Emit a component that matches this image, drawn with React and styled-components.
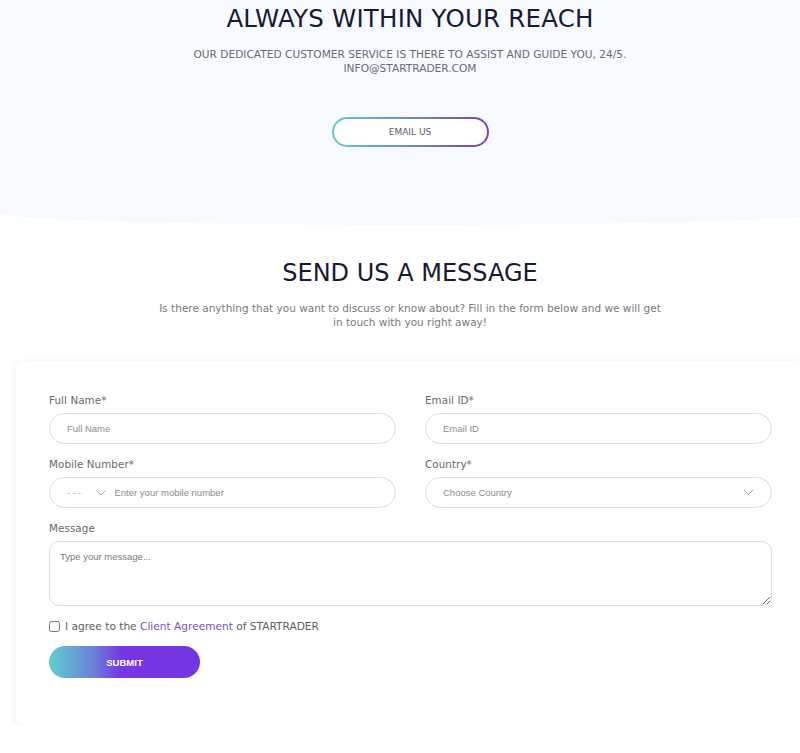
import styled, { createGlobalStyle } from "styled-components";

const GlobalStyle = createGlobalStyle`
  html, body {
    margin: 0;
    padding: 0;
    background: #ffffff;
    overflow-x: hidden;
  }
  body {
    font-family: "DejaVu Sans", "Noto Sans", sans-serif;
    color: #1c1c30;
  }
  * { box-sizing: border-box; }
`;

const Page = styled.main`
  width: 820px;
`;

const Hero = styled.section`
  background: #f6faff;
  height: 225px;
  border-radius: 0 0 50% 50% / 0 0 12px 12px;
  text-align: center;
  padding-top: 3px;
`;

const Title = styled.h1`
  margin: 0;
  font-size: 24.5px;
  line-height: 32px;
  font-weight: 400;
  color: #181a33;
  letter-spacing: 0.2px;
`;

const Lead = styled.p`
  margin: 12px 0 0;
  font-size: 10.6px;
  line-height: 14px;
  color: #676a72;
  text-transform: uppercase;
`;

const OutlineButton = styled.button`
  margin-top: 42px;
  width: 157px;
  height: 30px;
  border-radius: 16px;
  border: 2px solid transparent;
  background:
    linear-gradient(#fff, #fff) padding-box,
    linear-gradient(90deg, #66ccc8, #7a42b6) border-box;
  font-family: inherit;
  font-size: 9px;
  color: #555a66;
  cursor: pointer;
`;

const Section = styled.section`
  text-align: center;
  padding-top: 33px;
`;

const SectionTitle = styled.h2`
  margin: 0;
  font-size: 24px;
  line-height: 30px;
  font-weight: 400;
  color: #181a33;
`;

const SectionText = styled.p`
  margin: 13px auto 0;
  width: 510px;
  font-size: 10.5px;
  line-height: 14px;
  color: #77797f;
`;

const Card = styled.form`
  margin: 32px 16px 0;
  background: #fff;
  border-radius: 8px;
  box-shadow: 0 2px 10px rgba(0, 0, 0, 0.08);
  padding: 32px 33px 47px;
  text-align: left;
`;

const Grid = styled.div`
  display: grid;
  grid-template-columns: 347px 347px;
  column-gap: 29px;
  row-gap: 13px;
`;

const Field = styled.div`
  display: flex;
  flex-direction: column;
  gap: 6px;
  grid-column: ${(p) => (p.$wide ? "1 / -1" : "auto")};
`;

const Label = styled.label`
  font-size: 10.3px;
  line-height: 14px;
  color: #66686e;
  letter-spacing: 0.1px;
`;

const Pill = styled.div`
  height: 31px;
  border: 1px solid #dcdde0;
  border-radius: 16px;
  display: flex;
  align-items: center;
  padding: 0 17px;
  background: #fff;
`;

const Input = styled.input`
  flex: 1;
  min-width: 0;
  border: none;
  outline: none;
  background: transparent;
  font-family: "Liberation Sans", Arial, sans-serif;
  font-size: 9.5px;
  color: #333;
  padding: 0;
  &::placeholder { color: #8a8c90; }
`;

const Dial = styled.span`
  display: flex;
  align-items: center;
  gap: 12px;
  margin-right: 9px;
  font-family: "Liberation Sans", Arial, sans-serif;
  font-size: 9px;
  color: #a8aaae;
  letter-spacing: 2.5px;
`;

const SelectText = styled.span`
  flex: 1;
  font-family: "Liberation Sans", Arial, sans-serif;
  font-size: 9.5px;
  color: #8a8c90;
`;

const TextArea = styled.textarea`
  height: 65px;
  border: 1px solid #dcdde0;
  border-radius: 10px;
  padding: 9px 10px;
  font-family: "Liberation Sans", Arial, sans-serif;
  font-size: 9.5px;
  color: #333;
  outline: none;
  resize: both;
  &::placeholder { color: #77797d; }
`;

const Agree = styled.label`
  display: flex;
  align-items: center;
  gap: 5px;
  margin-top: 13px;
  font-size: 10.6px;
  line-height: 14px;
  color: #5a5c62;
  input {
    margin: 0;
    width: 11px;
    height: 11px;
  }
  a {
    color: #7b52b3;
    text-decoration: none;
  }
`;

const Submit = styled.button`
  margin-top: 13px;
  width: 151px;
  height: 32px;
  border: none;
  border-radius: 16px;
  background: linear-gradient(90deg, #5fcfd0 0%, #6b7fd8 30%, #7636e2 48%, #7436e0 100%);
  color: #fff;
  font-family: "Liberation Sans", Arial, sans-serif;
  font-size: 9.5px;
  font-weight: 700;
  cursor: pointer;
`;

const Chevron = ({ size = 10, color = "#9a9ca0" }) => (
  <svg width={size} height={size * 0.6} viewBox="0 0 10 6" fill="none">
    <path d="M1 1l4 4 4-4" stroke={color} strokeWidth="0.9" strokeLinecap="round" />
  </svg>
);

export default function App() {
  return (
    <Page>
      <GlobalStyle />
      <Hero>
        <Title>ALWAYS WITHIN YOUR REACH</Title>
        <Lead>
          Our dedicated customer service is there to assist and guide you, 24/5.
          <br />
          info@startrader.com
        </Lead>
        <OutlineButton type="button">EMAIL US</OutlineButton>
      </Hero>

      <Section>
        <SectionTitle>SEND US A MESSAGE</SectionTitle>
        <SectionText>
          Is there anything that you want to discuss or know about? Fill in the
          form below and we will get in touch with you right away!
        </SectionText>

        <Card onSubmit={(e) => e.preventDefault()}>
          <Grid>
            <Field>
              <Label>Full Name*</Label>
              <Pill>
                <Input placeholder="Full Name" />
              </Pill>
            </Field>
            <Field>
              <Label>Email ID*</Label>
              <Pill>
                <Input placeholder="Email ID" />
              </Pill>
            </Field>
            <Field>
              <Label>Mobile Number*</Label>
              <Pill>
                <Dial>
                  ---
                  <Chevron />
                </Dial>
                <Input placeholder="Enter your mobile number" />
              </Pill>
            </Field>
            <Field>
              <Label>Country*</Label>
              <Pill>
                <SelectText>Choose Country</SelectText>
                <Chevron size={11} />
              </Pill>
            </Field>
            <Field $wide>
              <Label>Message</Label>
              <TextArea placeholder="Type your message..." />
            </Field>
          </Grid>
          <Agree>
            <input type="checkbox" />
            <span>
              I agree to the <a href="#">Client Agreement</a> of STARTRADER
            </span>
          </Agree>
          <Submit type="submit">SUBMIT</Submit>
        </Card>
      </Section>
    </Page>
  );
}
